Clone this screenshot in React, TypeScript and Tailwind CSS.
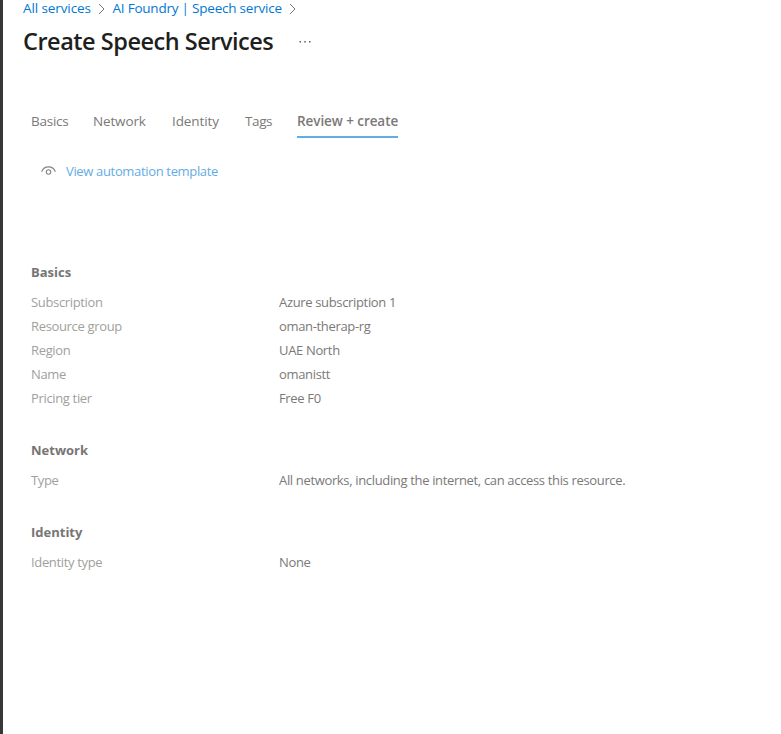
import React from "react";

type Row = { label: string; value: string };

function Chevron() {
  return (
    <svg className="h-[12px] w-[8px] shrink-0" viewBox="0 0 8 12" fill="none" stroke="#797775" strokeWidth="1">
      <path d="M1 1 6 6 1 11" />
    </svg>
  );
}

function Section({ title, rows }: { title: string; rows: Row[] }) {
  return (
    <section>
      <h2 className="h-[18px] text-[13px] leading-[18px] font-bold whitespace-nowrap text-[#777574]">{title}</h2>
      <dl className="mt-[9px] tracking-[-0.34px]">
        {rows.map((r) => (
          <div key={r.label} className="flex h-6 items-center">
            <dt className="w-[248px] shrink-0 whitespace-nowrap text-[#a19f9d]">{r.label}</dt>
            <dd className="whitespace-nowrap text-[#7b7978]">{r.value}</dd>
          </div>
        ))}
      </dl>
    </section>
  );
}

export default function App() {
  return (
    <div className="h-[734px] w-[781px] overflow-hidden border-l-[3px] border-[#383838] bg-white pl-5 font-['Open_Sans','Noto_Sans',sans-serif] text-[13px] leading-[18px]">
      <nav className="flex h-[17px] items-center text-[13.5px] leading-[16px] whitespace-nowrap text-[#0078d4]">
        <a className="w-[75px] self-start tracking-[-0.1px]">All services</a>
        <Chevron />
        <a className="ml-[6.5px] w-[176.5px] self-start tracking-[-0.22px]">AI Foundry | Speech service</a>
        <Chevron />
      </nav>
      <header className="mt-[8px] flex h-8 items-center">
        <h1 className="w-[276px] text-[23.5px] leading-8 font-semibold tracking-[-0.48px] whitespace-nowrap text-[#201f1e]">Create Speech Services</h1>
        <svg className="mt-px h-[4px] w-[12px]" viewBox="0 0 12 4" fill="#605e5c">
          <rect x="0.500" y="1" width="1.500" height="1.500" />
          <rect x="5.250" y="1" width="1.500" height="1.500" />
          <rect x="10" y="1" width="1.500" height="1.500" />
        </svg>
      </header>
      <main className="pl-2">
        <div className="mt-[48px] flex h-[33px] text-[13.5px] whitespace-nowrap text-[#7b7978]">
          <div className="w-[62px] pt-[7px] tracking-[-0.25px]">Basics</div>
          <div className="w-[79px] pt-[7px] tracking-[-0.15px]">Network</div>
          <div className="w-[73px] pt-[7px] tracking-[-0.1px]">Identity</div>
          <div className="w-[52px] pt-[7px] tracking-[-0.4px]">Tags</div>
          <div className="w-[101px] border-b-2 border-[#66ace4] pt-[7px] font-semibold tracking-[-0.07px]">Review + create</div>
        </div>
        <div className="mt-[24px] flex h-[18px] items-center pl-[10px]">
          <svg className="h-[10px] w-[15px]" viewBox="0 0 15 10" fill="none" stroke="#858382" strokeWidth="1.100">
            <path d="M.6 5.800C1.800 2.600 4.400.9 7.500.9s5.700 1.700 6.900 4.900" />
            <circle cx="7.500" cy="6" r="2.200" />
          </svg>
          <a className="ml-[10px] tracking-[-0.34px] whitespace-nowrap text-[#66ace4]">View automation template</a>
        </div>
        <div className="mt-[83px] flex flex-col gap-[31px]">
          <Section
            title="Basics"
            rows={[
              { label: "Subscription", value: "Azure subscription 1" },
              { label: "Resource group", value: "oman-therap-rg" },
              { label: "Region", value: "UAE North" },
              { label: "Name", value: "omanistt" },
              { label: "Pricing tier", value: "Free F0" },
            ]}
          />
          <Section
            title="Network"
            rows={[{ label: "Type", value: "All networks, including the internet, can access this resource." }]}
          />
          <Section title="Identity" rows={[{ label: "Identity type", value: "None" }]} />
        </div>
      </main>
    </div>
  );
}
